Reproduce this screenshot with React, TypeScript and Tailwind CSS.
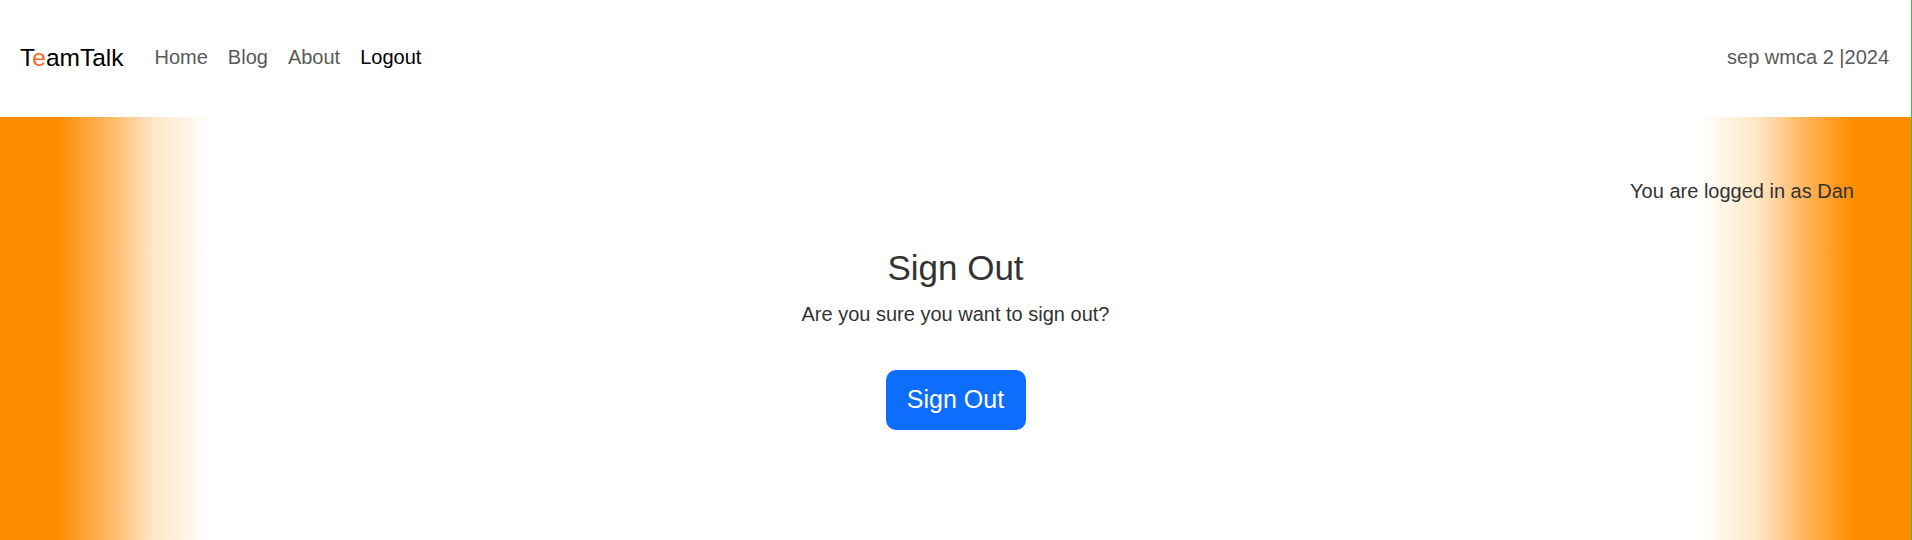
import React from "react";

export default function App() {
  return (
    <div className="flex min-h-[540px] flex-col border-r border-[#32cd32] bg-white font-['Liberation_Sans',Arial,sans-serif] text-[#333333]">
      <nav className="flex h-[117px] items-center pb-[3px] pl-5 pr-[22px]">
        <a className="mr-[21px] text-[24.5px] leading-[37px] text-black" href="#">
          T<span className="text-[#f26a1b]">e</span>amTalk
        </a>
        <ul className="flex items-center text-[20px] leading-[30px]">
          <li><a className="block px-[10px] text-[#595959]" href="#">Home</a></li>
          <li><a className="block px-[10px] text-[#595959]" href="#">Blog</a></li>
          <li><a className="block px-[10px] text-[#595959]" href="#">About</a></li>
          <li><a className="block px-[10px] text-black" href="#">Logout</a></li>
        </ul>
        <span className="ml-auto text-[20px] leading-[30px] text-[#595959]">sep wmca 2 |2024</span>
      </nav>
      <main className="flex flex-1 flex-col bg-[linear-gradient(to_right,#ff8c00_0%,#ff8c00_3%,#ffb45a_5.5%,#ffe6c6_8%,#ffffff_11%,#ffffff_89%,#ffe6c6_92%,#ffb45a_94.5%,#ff8c00_97%,#ff8c00_100%)] pt-[59px]">
        <p className="pr-[57px] text-right text-[20px] leading-[30px]">You are logged in as Dan</p>
        <div className="mt-[41px] flex flex-col items-center">
          <h3 className="mb-[10px] text-[35px] font-normal leading-[42px]">Sign Out</h3>
          <p className="text-[20px] leading-[30px]">Are you sure you want to sign out?</p>
          <button className="mt-[41px] flex h-[60px] w-[140px] items-center justify-center rounded-[10px] bg-[#0d6efd] text-[25px] leading-[37.5px] text-white">
            Sign Out
          </button>
        </div>
      </main>
    </div>
  );
}
